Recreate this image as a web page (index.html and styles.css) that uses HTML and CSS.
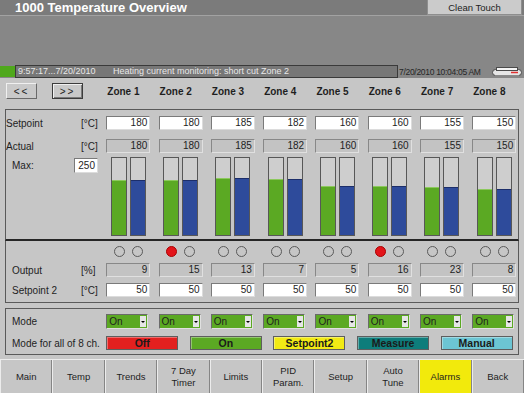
FILE: index.html
```html
<!DOCTYPE html>
<html lang="en">
<head>
    <meta charset="UTF-8">
    <title>1000 Temperature Overview</title>
    <link rel="stylesheet" href="styles.css">
</head>
<body>
    <div class="titlebar">
        <span class="title">1000 Temperature Overview</span>
        <button class="clean">Clean Touch</button>
    </div>
    <div class="monitor"></div>
    <div class="status">
        <span class="led"></span>
        <div class="msg">
            <span class="msg-time">9:57:17...7/20/2010</span>
            <span>Heating current monitoring: short cut Zone 2</span>
        </div>
        <span class="clock">7/20/2010 10:04:05 AM</span>
        <svg class="printer" width="32" height="12" viewBox="0 0 32 12">
            <rect x="1.5" y="3.5" width="29" height="6" rx="3" fill="#e6e6e6" stroke="#4a4a4a"/>
            <rect x="5.5" y="1.5" width="21" height="3" fill="#f4f4f4" stroke="#4a4a4a"/>
            <line x1="20" y1="6.5" x2="27" y2="6.5" stroke="#e03030" stroke-width="1.5"/>
            <line x1="4" y1="9.5" x2="28" y2="9.5" stroke="#8a8a8a"/>
        </svg>
    </div>

    <div class="toolbar">
        <div class="arrows">
            <button class="arr">&lt;&lt;</button>
            <button class="arr active">&gt;&gt;</button>
        </div>
        <div class="zone">Zone 1</div>
        <div class="zone">Zone 2</div>
        <div class="zone">Zone 3</div>
        <div class="zone">Zone 4</div>
        <div class="zone">Zone 5</div>
        <div class="zone">Zone 6</div>
        <div class="zone">Zone 7</div>
        <div class="zone">Zone 8</div>
    </div>

    <!-- setpoint / actual / bars -->
    <div class="panel p1">
        <div class="row">
            <div class="lbl"><span>Setpoint</span><span>[°C]</span></div>
            <div class="field">180</div>
            <div class="field">180</div>
            <div class="field">185</div>
            <div class="field">182</div>
            <div class="field">160</div>
            <div class="field">160</div>
            <div class="field">155</div>
            <div class="field">150</div>
        </div>
        <div class="row gap9">
            <div class="lbl"><span>Actual</span><span>[°C]</span></div>
            <div class="field ro">180</div>
            <div class="field ro">180</div>
            <div class="field ro">185</div>
            <div class="field ro">182</div>
            <div class="field ro">160</div>
            <div class="field ro">160</div>
            <div class="field ro">155</div>
            <div class="field ro">150</div>
        </div>
        <div class="row bars">
            <div class="max"><span class="max-name">Max:</span><div class="field max-field">250</div></div>
            <div class="pair"><div class="bar"><div class="fill sp" style="height:72%"></div></div><div class="bar"><div class="fill act" style="height:72%"></div></div></div>
            <div class="pair"><div class="bar"><div class="fill sp" style="height:72%"></div></div><div class="bar"><div class="fill act" style="height:72%"></div></div></div>
            <div class="pair"><div class="bar"><div class="fill sp" style="height:74%"></div></div><div class="bar"><div class="fill act" style="height:74%"></div></div></div>
            <div class="pair"><div class="bar"><div class="fill sp" style="height:72.8%"></div></div><div class="bar"><div class="fill act" style="height:72.8%"></div></div></div>
            <div class="pair"><div class="bar"><div class="fill sp" style="height:64%"></div></div><div class="bar"><div class="fill act" style="height:64%"></div></div></div>
            <div class="pair"><div class="bar"><div class="fill sp" style="height:64%"></div></div><div class="bar"><div class="fill act" style="height:64%"></div></div></div>
            <div class="pair"><div class="bar"><div class="fill sp" style="height:62%"></div></div><div class="bar"><div class="fill act" style="height:62%"></div></div></div>
            <div class="pair"><div class="bar"><div class="fill sp" style="height:60%"></div></div><div class="bar"><div class="fill act" style="height:60%"></div></div></div>
        </div>
    </div>

    <!-- alarms / output / setpoint 2 -->
    <div class="panel p2">
        <div class="row">
            <div></div>
            <div class="leds"><span class="dot"></span><span class="dot"></span></div>
            <div class="leds"><span class="dot on"></span><span class="dot"></span></div>
            <div class="leds"><span class="dot"></span><span class="dot"></span></div>
            <div class="leds"><span class="dot"></span><span class="dot"></span></div>
            <div class="leds"><span class="dot"></span><span class="dot"></span></div>
            <div class="leds"><span class="dot on"></span><span class="dot"></span></div>
            <div class="leds"><span class="dot"></span><span class="dot"></span></div>
            <div class="leds"><span class="dot"></span><span class="dot"></span></div>
        </div>
        <div class="row gap6">
            <div class="lbl"><span class="ind">Output</span><span>[%]</span></div>
            <div class="field ro">9</div>
            <div class="field ro">15</div>
            <div class="field ro">13</div>
            <div class="field ro">7</div>
            <div class="field ro">5</div>
            <div class="field ro">16</div>
            <div class="field ro">23</div>
            <div class="field ro">8</div>
        </div>
        <div class="row gap6">
            <div class="lbl"><span class="ind">Setpoint 2</span><span>[°C]</span></div>
            <div class="field">50</div>
            <div class="field">50</div>
            <div class="field">50</div>
            <div class="field">50</div>
            <div class="field">50</div>
            <div class="field">50</div>
            <div class="field">50</div>
            <div class="field">50</div>
        </div>
    </div>

    <!-- mode -->
    <div class="panel p3">
        <div class="row">
            <div class="lbl"><span class="ind">Mode</span></div>
            <div class="sel">On<span class="caret"></span></div>
            <div class="sel">On<span class="caret"></span></div>
            <div class="sel">On<span class="caret"></span></div>
            <div class="sel">On<span class="caret"></span></div>
            <div class="sel">On<span class="caret"></span></div>
            <div class="sel">On<span class="caret"></span></div>
            <div class="sel">On<span class="caret"></span></div>
            <div class="sel">On<span class="caret"></span></div>
        </div>
        <div class="row gap7">
            <div class="lbl all"><span class="ind">Mode for all of 8 ch.</span></div>
            <div class="modes">
                <div class="mb off">Off</div>
                <div class="mb on">On</div>
                <div class="mb sp2">Setpoint2</div>
                <div class="mb meas">Measure</div>
                <div class="mb man">Manual</div>
            </div>
        </div>
    </div>

    <div class="navbar">
        <div class="nb">Main</div>
        <div class="nb">Temp</div>
        <div class="nb">Trends</div>
        <div class="nb">7 Day<br>Timer</div>
        <div class="nb">Limits</div>
        <div class="nb">PID<br>Param.</div>
        <div class="nb">Setup</div>
        <div class="nb">Auto<br>Tune</div>
        <div class="nb alarm">Alarms</div>
        <div class="nb">Back</div>
    </div>
</body>
</html>
```

FILE: styles.css
```css
*{
    margin: 0;
    padding: 0;
    box-sizing: border-box;
}
body{
    width: 524px;
    height: 393px;
    overflow: hidden;
    background: #c6c6c6;
    font-family: "Liberation Sans", Arial, sans-serif;
    font-size: 10px;
    color: #1e1e1e;
}

/* top bar */
.titlebar{
    height: 16px;
    background: #7b7b7b;
    border-bottom: 1px solid #a2a2a2;
    display: flex;
    justify-content: space-between;
    align-items: flex-start;
}
.title{
    color: #fff;
    font-weight: bold;
    font-size: 13px;
    line-height: 15px;
    padding-left: 15px;
}
.clean{
    width: 95px;
    height: 15px;
    margin-right: 2px;
    background: #cbcbcb;
    border: 1px solid #8e8e8e;
    border-top: 0;
    font: 9.5px "Liberation Sans", Arial, sans-serif;
    color: #222;
}
.monitor{
    height: 49px;
    background: #878787;
}
.status{
    height: 13px;
    background: #878787;
    display: flex;
    align-items: center;
    white-space: nowrap;
}
.led{
    width: 15px;
    height: 11px;
    background: #4fa81c;
    flex-shrink: 0;
}
.msg{
    width: 383px;
    height: 13px;
    flex-shrink: 0;
    background: #777;
    border: 1px solid #3a3a3a;
    color: #e8e8e8;
    font-size: 9px;
    line-height: 11px;
    display: flex;
    padding-left: 2px;
    overflow: hidden;
}
.msg-time{
    width: 95px;
}
.clock{
    width: 93px;
    flex-shrink: 0;
    padding-left: 1px;
    font-size: 8.5px;
    letter-spacing: -0.3px;
    color: #262626;
}
.printer{
    flex-shrink: 0;
}

/* zone header */
.toolbar{
    margin: 5px 0 0 6px;
    height: 16px;
    display: grid;
    grid-template-columns: 92px repeat(8, 44px);
    column-gap: 8.29px;
    align-items: center;
}
.arrows{
    display: flex;
    gap: 15px;
}
.arr{
    width: 31px;
    height: 16px;
    flex-shrink: 0;
    background: #c9c9c9;
    border: 1px solid;
    border-color: #f0f0f0 #6a6a6a #6a6a6a #f0f0f0;
    font: 10px "Liberation Sans", Arial, sans-serif;
    letter-spacing: 2px;
    color: #222;
}
.arr.active{
    border: 1px solid #3c3c3c;
    box-shadow: inset 1px 1px 0 #f0f0f0, inset -1px -1px 0 #7a7a7a;
}
.zone{
    font-weight: bold;
    padding-left: 1px;
}

/* panels */
.panel{
    width: 514px;
    margin-left: 5px;
    border: 1px solid #5a5a5a;
}
.p1{
    margin-top: 10px;
    padding: 6px 0 3px;
    border-bottom: 2px solid #262626;
}
.p2{
    border-top: 0;
    padding: 5px 0;
}
.p3{
    margin-top: 5px;
    padding: 5px 0 4px;
}
.row{
    display: grid;
    grid-template-columns: 92px repeat(8, 44px);
    column-gap: 8.29px;
    align-items: center;
}
.gap9{ margin-top: 9px; }
.gap7{ margin-top: 7px; }
.gap6{ margin-top: 6px; }
.lbl{
    display: grid;
    grid-template-columns: 75px auto;
    white-space: nowrap;
}
.lbl.all{
    grid-template-columns: auto;
}
.ind{
    padding-left: 6px;
}
.field{
    height: 14px;
    background: #fff;
    border: 1px solid;
    border-color: #7a7a7a #dcdcdc #dcdcdc #7a7a7a;
    text-align: right;
    padding-right: 2px;
    line-height: 12px;
}
.field.ro{
    background: #c3c3c3;
    border-color: #888 #e0e0e0 #e0e0e0 #888;
}

/* bars */
.bars{
    margin-top: 4px;
    align-items: start;
}
.max{
    display: flex;
    align-items: center;
    padding: 1px 0 0 6px;
}
.max-name{
    width: 64px;
}
.max-field{
    width: 24px;
    height: 15px;
    line-height: 13px;
}
.pair{
    display: flex;
    justify-content: center;
    gap: 3px;
}
.bar{
    width: 16px;
    height: 79px;
    border: 1px solid #575757;
    background: #cecece;
    display: flex;
    align-items: flex-end;
}
.fill{
    width: 100%;
}
.fill.sp{
    background: #5ba923;
    border-top: 1px solid #8cc85c;
}
.fill.act{
    background: #2e4b9b;
    border-top: 1px solid #1c2e6a;
}

/* alarm lamps */
.leds{
    display: flex;
    justify-content: center;
    gap: 7px;
}
.dot{
    width: 11px;
    height: 11px;
    border-radius: 50%;
    border: 1px solid #5a5a5a;
}
.dot.on{
    background: #e3141a;
    border-color: #a00;
}

/* mode */
.sel{
    width: 42px;
    height: 15px;
    background: #5ba923;
    border: 1px solid;
    border-color: #6a6a6a #e0e0e0 #e0e0e0 #6a6a6a;
    display: flex;
    justify-content: space-between;
    align-items: center;
    padding-left: 2px;
}
.caret{
    width: 6px;
    height: 11px;
    margin-right: 1px;
    background: #e6e6e6;
    display: flex;
    align-items: center;
    justify-content: center;
}
.caret::after{
    content: "";
    border-left: 2px solid transparent;
    border-right: 2px solid transparent;
    border-top: 2px solid #000;
}
.modes{
    grid-column: 2 / -1;
    display: grid;
    grid-template-columns: repeat(5, 72px);
    column-gap: 11.6px;
}
.mb{
    height: 14px;
    border: 1px solid #5e5e5e;
    box-shadow: inset 1px 1px 0 rgba(255,255,255,0.35);
    font-weight: bold;
    font-size: 10.5px;
    line-height: 12px;
    text-align: center;
    color: #1a1a1a;
}
.mb.off{ background: #e3201f; }
.mb.on{ background: #5ba923; }
.mb.sp2{ background: #f2ea14; }
.mb.meas{ background: #0e7d7b; }
.mb.man{ background: #6cc5d3; }

/* bottom navigation */
.navbar{
    margin-top: 4px;
    height: 34px;
    display: grid;
    grid-template-columns: repeat(10, 1fr);
    border-top: 1px solid #ececec;
}
.nb{
    background: #c6c6c6;
    border-left: 1px solid #ececec;
    border-right: 1px solid #858585;
    display: flex;
    align-items: center;
    justify-content: center;
    text-align: center;
    font-size: 9.5px;
    line-height: 12px;
}
.nb.alarm{
    background: #f2ea0c;
}
```
